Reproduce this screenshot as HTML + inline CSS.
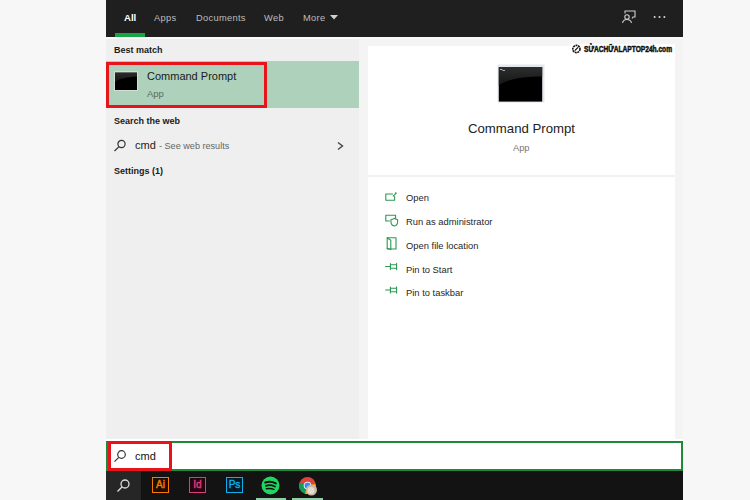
<!DOCTYPE html>
<html><head><meta charset="utf-8">
<style>
*{margin:0;padding:0;box-sizing:border-box}
html,body{width:750px;height:500px;overflow:hidden;background:#f7f7f7;font-family:"Liberation Sans",sans-serif}
.a{position:absolute;white-space:nowrap;line-height:1}
#top{position:absolute;left:106px;top:0;width:577px;height:37px;background:#1f1f1f}
#lp{position:absolute;left:106px;top:37px;width:253px;height:402px;background:#efefef}
#gut{position:absolute;left:359px;top:37px;width:324px;height:402px;background:#f4f4f4}
#card{position:absolute;left:368px;top:46px;width:307px;height:393px;background:#fff}
#sb{position:absolute;left:106px;top:439px;width:577px;height:32px;background:#fff}
#sbg{position:absolute;left:106px;top:441px;width:577px;height:30px;border:2px solid #1c8a3a}
#tb{position:absolute;left:106px;top:471px;width:577px;height:29px;background:#131313}
.tab{color:#bdbdbd;font-size:9.3px;letter-spacing:0.3px}
.hdr{color:#1a1a1a;font-size:9px;font-weight:bold}
.act{color:#1f1f1f;font-size:9.4px}
</style></head><body>
<div id="top"></div>
<div id="lp"></div>
<div id="gut"></div>
<div id="card"></div>
<div id="sb"></div>
<div id="sbg"></div>
<div id="tb"></div>
<div style="position:absolute;left:106px;top:37px;width:577px;height:2px;background:#f9f9f9"></div>

<!-- tabs -->
<div class="a" style="left:124px;top:13px;color:#fff;font-size:9.6px;font-weight:bold">All</div>
<div style="position:absolute;left:115px;top:33px;width:30px;height:4px;background:#18a548"></div>
<div class="a tab" style="left:154px;top:13.5px">Apps</div>
<div class="a tab" style="left:196px;top:13.5px">Documents</div>
<div class="a tab" style="left:264px;top:13.5px">Web</div>
<div class="a tab" style="left:303px;top:13.5px">More</div>
<svg style="position:absolute;left:329px;top:14px" width="10" height="7"><path d="M1 1 L9 1 L5 5.5Z" fill="#d0d0d0"/></svg>
<!-- feedback icon -->
<svg style="position:absolute;left:621px;top:10px" width="16" height="14" viewBox="0 0 16 14">
<g fill="none" stroke="#d0d0d0" stroke-width="1.1">
<path d="M4 3.5 V1 H14 V7 H12 L11 8.5"/>
<circle cx="6" cy="7" r="2.2"/>
<path d="M1.5 13 C2 10.5 4 9.5 6 9.5 C8 9.5 10 10.5 10.5 13"/>
</g></svg>
<svg style="position:absolute;left:653px;top:15px" width="14" height="4"><g fill="#d8d8d8"><circle cx="1.6" cy="2" r="1"/><circle cx="6.5" cy="2" r="1"/><circle cx="11.4" cy="2" r="1"/></g></svg>

<!-- left panel -->
<div class="a hdr" style="left:114px;top:46px">Best match</div>
<div style="position:absolute;left:106px;top:61px;width:253px;height:47px;background:#add1bb"></div>
<div style="position:absolute;left:106px;top:62px;width:161px;height:46px;border:3px solid #e8141c"></div>
<svg style="position:absolute;left:114px;top:71px" width="24" height="20" viewBox="114 71 24 20">
<defs><linearGradient id="g1" x1="0" y1="0" x2="0" y2="1"><stop offset="0" stop-color="#2c2c2c"/><stop offset="1" stop-color="#141414"/></linearGradient></defs>
<rect x="114.5" y="71.5" width="23" height="19" fill="#000" stroke="#d4dcd6" stroke-width="1"/>
<path d="M115 72.2 H137 V76.4 C128 77 119 78.5 115 82 Z" fill="url(#g1)"/>
<rect x="115" y="72" width="22" height="1" fill="#6a6a6a"/>
</svg>
<div class="a" style="left:147px;top:71px;color:#1a1a1a;font-size:11px">Command Prompt</div>
<div class="a" style="left:147px;top:89px;color:#596b60;font-size:9.5px">App</div>

<div class="a hdr" style="left:114px;top:117px">Search the web</div>
<svg style="position:absolute;left:113px;top:139px" width="14" height="13" viewBox="0 0 14 13"><g fill="none" stroke="#333" stroke-width="1.2"><circle cx="8.5" cy="5" r="3.6"/><path d="M6 7.6 L1.5 12"/></g></svg>
<div class="a" style="left:135px;top:140px;color:#222;font-size:11px">cmd</div>
<div class="a" style="left:159px;top:142px;color:#666;font-size:9.1px">- See web results</div>
<svg style="position:absolute;left:336px;top:140.5px" width="9" height="10" viewBox="0 0 9 10"><path d="M2 1.5 L6.5 5 L2 8.5" fill="none" stroke="#444" stroke-width="1.4"/></svg>
<div class="a hdr" style="left:114px;top:167px">Settings (1)</div>

<!-- card -->
<svg style="position:absolute;left:497px;top:64px" width="48" height="39" viewBox="497 64 48 39">
<defs><linearGradient id="g2" x1="0" y1="0" x2="0" y2="1"><stop offset="0" stop-color="#2e2e2e"/><stop offset="1" stop-color="#141414"/></linearGradient></defs>
<rect x="497.5" y="64.5" width="47" height="38" fill="#e4e8ee"/>
<rect x="498.8" y="67" width="43.4" height="34.6" fill="#000"/>
<path d="M498.8 67 H542.2 V76.5 C525 76.5 508 78.5 498.8 85.5 Z" fill="url(#g2)"/>
<path d="M500 69.5 H502.5 M502.5 70.5 H505" stroke="#bbb" stroke-width="0.9"/>
</svg>
<div class="a" style="left:468px;top:122px;color:#222;font-size:13.2px">Command Prompt</div>
<div class="a" style="left:513px;top:144px;color:#777;font-size:9.3px">App</div>
<div style="position:absolute;left:368px;top:175px;width:307px;height:2px;background:#f1f1f1"></div>

<div class="a act" style="left:406px;top:193px">Open</div>
<div class="a act" style="left:406px;top:217px">Run as administrator</div>
<div class="a act" style="left:406px;top:241px">Open file location</div>
<div class="a act" style="left:406px;top:265px">Pin to Start</div>
<div class="a act" style="left:406px;top:288px">Pin to taskbar</div>


<!-- action icons -->
<svg style="position:absolute;left:383px;top:190px" width="16" height="108" viewBox="383 190 16 108">
<g fill="none" stroke="#2b9a4f" stroke-width="1.1" stroke-linejoin="round" stroke-linecap="round">
<path d="M392.5 194 H385.8 V200.2 H394.6 V196.6"/>
<path d="M393.2 196.2 L395.6 193.6"/>
<circle cx="395.8" cy="193.2" r="0.9" fill="#2b9a4f" stroke="none"/>
<path d="M389.5 221 H385.8 V215.2 H395.6 V218"/>
<path d="M394.2 218.3 C393 219.3 392 219.5 391 219.5 V222 C391 224 392.8 225.6 394.3 226 C395.8 225.6 397.6 224 397.6 222 V219.5 C396.6 219.5 395.6 219.3 394.2 218.3Z"/>
<path d="M387.2 237.8 H396 V249 H387.2 Z"/>
<path d="M387.2 237.8 L390.8 240.2 V249.5 L387.2 248.2"/>
<path d="M385.6 266.5 H390.2"/>
<path d="M390.4 263.6 V269.4 M390.4 264.8 H396.6 M390.4 268.2 H396.6 M396.6 263.4 V269.6"/>
<path d="M385.6 290 H390.2"/>
<path d="M390.4 287.1 V292.9 M390.4 288.3 H396.6 M390.4 291.7 H396.6 M396.6 286.9 V293.1"/>
</g>
</svg>

<!-- watermark -->
<div style="position:absolute;left:570px;top:44px;width:105px;height:10px;background:#fff"></div>
<svg style="position:absolute;left:571px;top:44px" width="11" height="10" viewBox="0 0 11 10"><circle cx="5.4" cy="5" r="3.6" fill="none" stroke="#111" stroke-width="1.6" stroke-dasharray="2 0.6"/><path d="M3.8 6.6 L7 3.4" stroke="#111" stroke-width="1.3"/></svg>
<div class="a" style="left:584px;top:44.5px;font-size:9px;font-weight:bold;color:#111;transform:scaleX(0.735);transform-origin:0 0;-webkit-text-stroke:0.5px #111">SỬACHỮALAPTOP24h.com</div>

<!-- search box -->
<div style="position:absolute;left:108px;top:441px;width:64px;height:30px;border:3px solid #e8141c"></div>
<svg style="position:absolute;left:113px;top:449px" width="14" height="14" viewBox="0 0 14 14"><g fill="none" stroke="#333" stroke-width="1.2"><circle cx="8.5" cy="5.5" r="3.8"/><path d="M5.8 8.3 L1.5 12.6"/></g></svg>
<div class="a" style="left:135px;top:451px;color:#111;font-size:11px">cmd</div>

<!-- taskbar -->
<div style="position:absolute;left:106px;top:471px;width:35px;height:29px;background:#262626"></div>
<svg style="position:absolute;left:116px;top:478px" width="15" height="15" viewBox="0 0 15 15"><g fill="none" stroke="#ddd" stroke-width="1.3"><circle cx="9" cy="6" r="4"/><path d="M6.2 8.8 L1.5 13.5"/></g></svg>
<div style="position:absolute;left:152px;top:477px;width:17px;height:16px;background:#1e0e00;border:1.4px solid #f57c00;color:#f57c00;font-size:10px;text-align:center;line-height:13px;-webkit-text-stroke:0.4px #f57c00">Ai</div>
<div style="position:absolute;left:189px;top:477px;width:17px;height:16px;background:#26040f;border:1.4px solid #e03a80;color:#e03a80;font-size:10px;text-align:center;line-height:13px;-webkit-text-stroke:0.4px #e03a80">Id</div>
<div style="position:absolute;left:226px;top:477px;width:17px;height:16px;background:#001a28;border:1.4px solid #12aee8;color:#12aee8;font-size:10px;text-align:center;line-height:13px;-webkit-text-stroke:0.4px #12aee8">Ps</div>
<svg style="position:absolute;left:261px;top:476px" width="19" height="19" viewBox="0 0 19 19">
<circle cx="9.5" cy="9.5" r="9" fill="#1ed760"/>
<g fill="none" stroke="#111" stroke-linecap="round"><path d="M4.3 6.6 C7.5 5.4 11.5 5.7 14.8 7.4" stroke-width="2.1"/><path d="M4.9 9.8 C7.5 8.9 10.9 9.1 13.9 10.5" stroke-width="1.8"/><path d="M5.4 12.8 C7.8 12.1 10.4 12.3 12.9 13.4" stroke-width="1.5"/></g>
</svg>
<div style="position:absolute;left:256px;top:498px;width:30px;height:2px;background:#8fd0a4"></div>
<svg style="position:absolute;left:298px;top:476px" width="20" height="20" viewBox="0 0 20 20">
<circle cx="9.5" cy="9.5" r="8.5" fill="#db4437"/>
<path d="M9.5 9.5 L1.5 6.5 A8.5 8.5 0 0 0 7 17.7Z" fill="#0f9d58"/>
<path d="M9.5 9.5 L7 17.7 A8.5 8.5 0 0 0 17.5 8 Z" fill="#f4b400"/>
<circle cx="9.5" cy="9.5" r="3.8" fill="#fff"/><circle cx="9.5" cy="9.5" r="3" fill="#4285f4"/>
<circle cx="13.5" cy="14" r="5.5" fill="#c9b9a6"/>
<circle cx="13" cy="14.5" r="3.5" fill="#e8dccd"/>
</svg>
<div style="position:absolute;left:292px;top:498px;width:31px;height:2px;background:#8fd0a4"></div>
</body></html>
